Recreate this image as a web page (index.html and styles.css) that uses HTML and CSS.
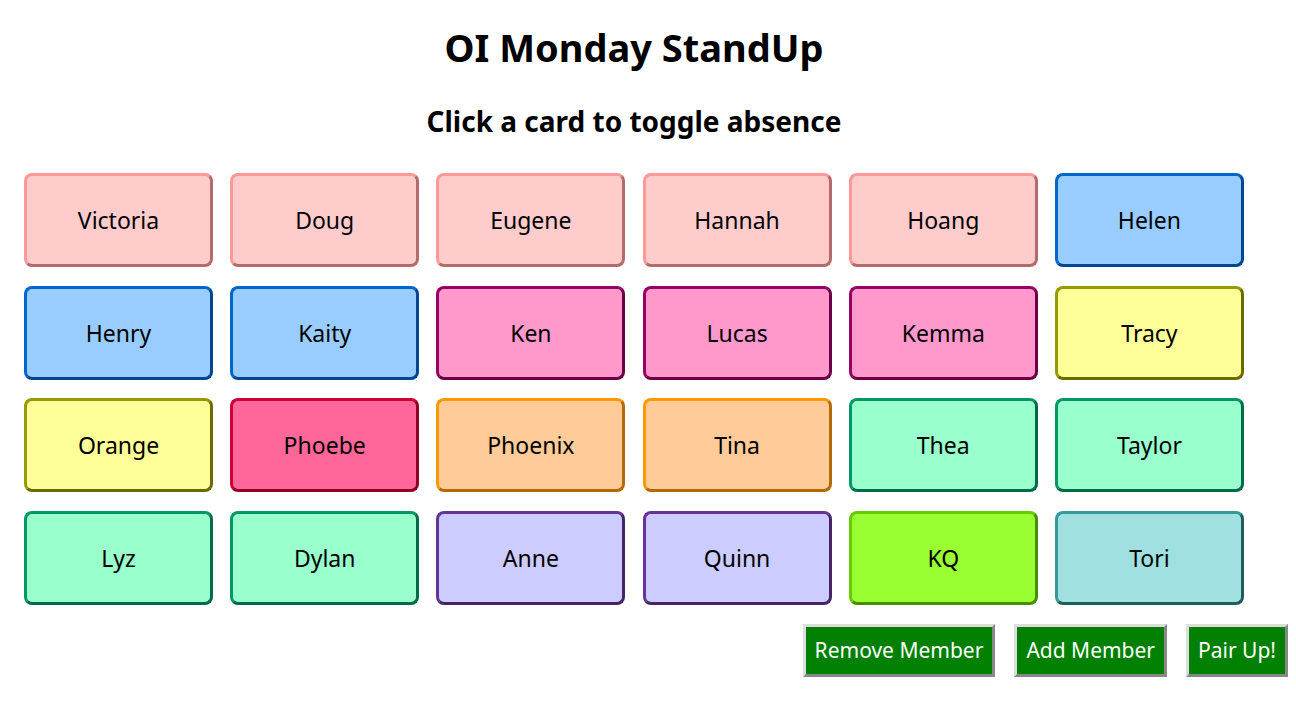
FILE: index.html
```html
<!DOCTYPE html>
<html>
<head>
<meta charset="utf-8">
<link rel="stylesheet" href="styles.css">
</head>
<body>
<div class="board">
  <h1 class="title">OI Monday StandUp</h1>
  <h2 class="subtitle">Click a card to toggle absence</h2>
  <div class="grid">
    <button class="card pink">Victoria</button>
    <button class="card pink">Doug</button>
    <button class="card pink">Eugene</button>
    <button class="card pink">Hannah</button>
    <button class="card pink">Hoang</button>
    <button class="card blue">Helen</button>
    <button class="card blue">Henry</button>
    <button class="card blue">Kaity</button>
    <button class="card magenta">Ken</button>
    <button class="card magenta">Lucas</button>
    <button class="card magenta">Kemma</button>
    <button class="card yellow">Tracy</button>
    <button class="card yellow">Orange</button>
    <button class="card rose">Phoebe</button>
    <button class="card orange">Phoenix</button>
    <button class="card orange">Tina</button>
    <button class="card mint">Thea</button>
    <button class="card mint">Taylor</button>
    <button class="card mint">Lyz</button>
    <button class="card mint">Dylan</button>
    <button class="card lavender">Anne</button>
    <button class="card lavender">Quinn</button>
    <button class="card lime">KQ</button>
    <button class="card teal">Tori</button>
  </div>
</div>
<div class="actions">
  <button class="action">Remove Member</button>
  <button class="action">Add Member</button>
  <button class="action">Pair Up!</button>
</div>
</body>
</html>
```

FILE: styles.css
```css
body {
  margin: 8px;
  font-family: "Noto Sans", "Open Sans", sans-serif;
  color: #000;
  background: #fff;
}
.board {
  width: max-content;
  padding: 0 16px;
}
.title {
  text-align: center;
  font-size: 38px;
  font-weight: 700;
  margin: 17px 0 0 0;
  line-height: 44px;
}
.subtitle {
  text-align: center;
  font-size: 28px;
  font-weight: 700;
  margin: 34px 0 0 0;
  line-height: 36px;
}
.grid {
  display: grid;
  grid-template-columns: repeat(6, 189px);
  column-gap: 17.2px;
  row-gap: 18.67px;
  margin-top: 34px;
}
.card {
  height: 94px;
  border-width: 3px;
  border-style: solid;
  border-radius: 8px;
  font-family: "Noto Sans", "Open Sans", sans-serif;
  font-size: 23px;
  color: #000;
  padding: 0;
  cursor: pointer;
}
.pink { background: #ffcccc; border-color: #ff9999 #b36b6b #b36b6b #ff9999; }
.blue { background: #99ccff; border-color: #0066cc #00478f #00478f #0066cc; }
.magenta { background: #ff99cc; border-color: #990066 #6b0047 #6b0047 #990066; }
.yellow { background: #ffff99; border-color: #999900 #6b6b00 #6b6b00 #999900; }
.rose { background: #ff6699; border-color: #cc0033 #8f0024 #8f0024 #cc0033; }
.orange { background: #ffcc99; border-color: #ff9900 #b36b00 #b36b00 #ff9900; }
.mint { background: #99ffcc; border-color: #009966 #006b47 #006b47 #009966; }
.lavender { background: #ccccff; border-color: #663399 #472466 #472466 #663399; }
.lime { background: #99ff33; border-color: #66cc00 #478f00 #478f00 #66cc00; }
.teal { background: #a0e0e0; border-color: #339999 #1f5c5c #1f5c5c #339999; }
.actions {
  display: flex;
  justify-content: flex-end;
  gap: 19px;
  margin-top: 19px;
}
.action {
  height: 53px;
  background: #008000;
  color: #fff;
  font-family: "Noto Sans", "Open Sans", sans-serif;
  font-size: 21px;
  padding: 0 9px;
  border-width: 3px;
  border-style: solid;
  border-color: #dddddd #888888 #888888 #dddddd;
  cursor: pointer;
}
```
